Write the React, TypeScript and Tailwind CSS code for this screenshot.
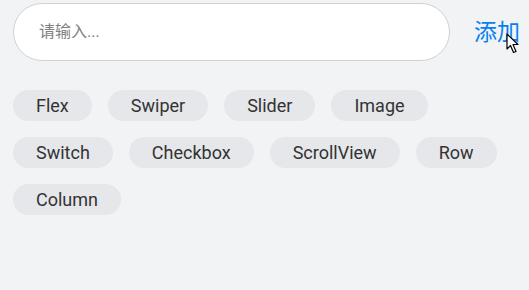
const tags = ["Flex", "Swiper", "Slider", "Image", "Switch", "Checkbox", "ScrollView", "Row", "Column"];

function Cursor() {
  return (
    <svg className="absolute left-[32px] top-[12px]" width="14" height="21" viewBox="0 0 14 21">
      <path d="M1 1 L1 16 L4.5 12.5 L7.5 19.5 L10 18.5 L7 11.5 L12 11.5 Z" fill="#fff" stroke="#000" strokeWidth="1.2" strokeLinejoin="round" />
    </svg>
  );
}

export default function App() {
  return (
    <main className="h-[290px] w-[529px] bg-[#f1f3f5] px-[13px] pt-[3px]" style={{ fontFamily: "Roboto, 'Noto Sans CJK SC', sans-serif" }}>
      <div className="flex items-center">
        <div className="flex h-[58px] flex-1 items-center rounded-full border-[1.5px] border-[#cfd1d4] bg-white px-[25px]">
          <span className="text-[16px] text-[#808080]">请输入...</span>
        </div>
        <button className="relative ml-[24px] mr-[-4px] text-[23px] leading-none text-[#0a7ff0]">
          添加
          <Cursor />
        </button>
      </div>
      <div className="mt-[29px] flex flex-wrap gap-4">
        {tags.map((t) => (
          <span key={t} className="flex h-[31px] items-center rounded-full bg-[#e5e7ea] px-[23px] text-[18px] text-[#333]">
            {t}
          </span>
        ))}
      </div>
    </main>
  );
}
